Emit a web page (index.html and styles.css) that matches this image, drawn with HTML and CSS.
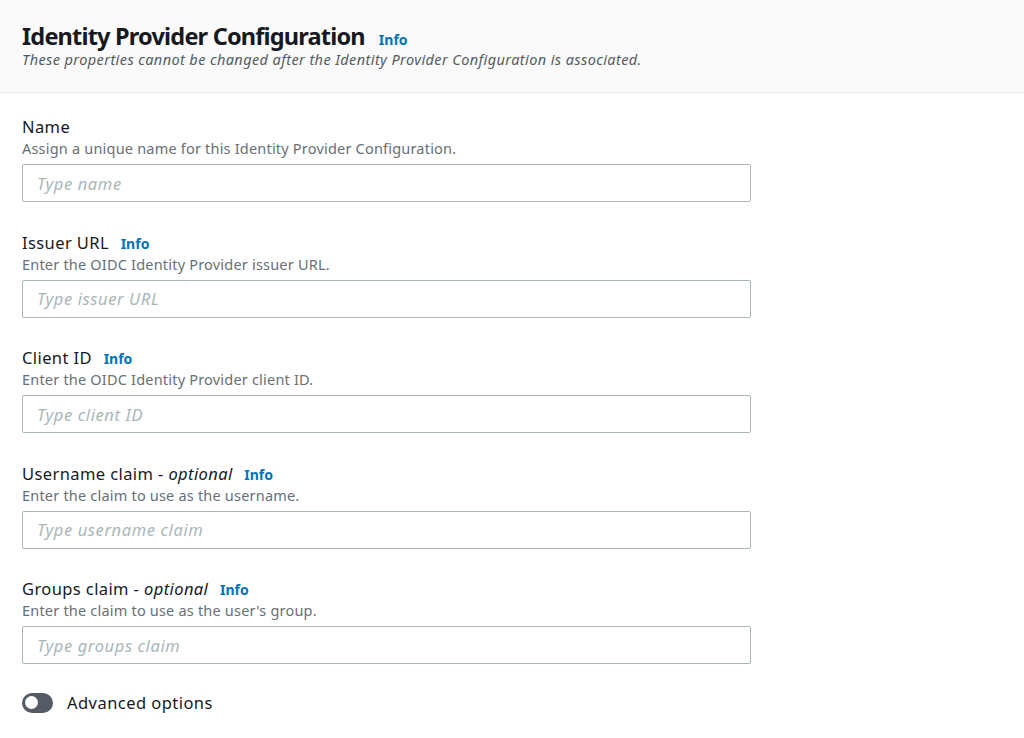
FILE: index.html
```html
<!DOCTYPE html>
<html lang="en">
<head>
<meta charset="utf-8">
<title>Identity Provider Configuration</title>
<link rel="stylesheet" href="styles.css">
</head>
<body>
<div class="panel">
  <header class="panel-header">
    <h2 class="title"><span>Identity Provider Configuration</span><a class="info" href="#">Info</a></h2>
    <p class="subtitle">These properties cannot be changed after the Identity Provider Configuration is associated.</p>
  </header>
  <form class="form">
    <div class="field">
      <label class="label">Name</label>
      <div class="desc">Assign a unique name for this Identity Provider Configuration.</div>
      <input class="input" type="text" placeholder="Type name">
    </div>
    <div class="field">
      <label class="label">Issuer URL <a class="info" href="#">Info</a></label>
      <div class="desc">Enter the OIDC Identity Provider issuer URL.</div>
      <input class="input" type="text" placeholder="Type issuer URL">
    </div>
    <div class="field">
      <label class="label">Client ID <a class="info" href="#">Info</a></label>
      <div class="desc">Enter the OIDC Identity Provider client ID.</div>
      <input class="input" type="text" placeholder="Type client ID">
    </div>
    <div class="field">
      <label class="label">Username claim - <i>optional</i> <a class="info" href="#">Info</a></label>
      <div class="desc">Enter the claim to use as the username.</div>
      <input class="input" type="text" placeholder="Type username claim">
    </div>
    <div class="field">
      <label class="label">Groups claim - <i>optional</i> <a class="info" href="#">Info</a></label>
      <div class="desc">Enter the claim to use as the user's group.</div>
      <input class="input" type="text" placeholder="Type groups claim">
    </div>
    <div class="toggle-row">
      <span class="toggle"><span class="knob"></span></span>
      <span class="toggle-label">Advanced options</span>
    </div>
  </form>
</div>
</body>
</html>
```
FILE: styles.css
```css
* { box-sizing: border-box; }
html, body { margin: 0; padding: 0; background: #ffffff; }
body {
  font-family: "Noto Sans", "Open Sans", Arial, sans-serif;
  color: #16191f;
}
.panel-header {
  background: #fafafa;
  border-bottom: 1px solid #eaeded;
  padding: 22px 22px 0;
  height: 93px;
}
.title {
  margin: 0;
  display: flex;
  align-items: baseline;
  gap: 14px;
  font-size: 23.5px;
  line-height: 28px;
  font-weight: 700;
  color: #16191f;
  letter-spacing: -0.8px;
}
.title .info { margin-left: 0; }
.subtitle {
  margin: -1px 0 0;
  font-size: 14.5px;
  line-height: 20px;
  font-style: italic;
  color: #545b64;
  letter-spacing: 0.4px;
}
.info {
  color: #0073bb;
  font-size: 14px;
  line-height: 20px;
  font-weight: 700;
  font-style: normal;
  text-decoration: none;
  margin-left: 7px;
  letter-spacing: 0;
}
.form {
  padding: 22px 22px 0;
  display: flex;
  flex-direction: column;
  gap: 28.5px;
}
.field { display: flex; flex-direction: column; width: 729px; }
.label {
  font-size: 16.5px;
  line-height: 23px;
  letter-spacing: 0.4px;
  color: #16191f;
}
.desc {
  font-size: 14.5px;
  line-height: 20px;
  letter-spacing: 0.2px;
  color: #687078;
  margin-bottom: 6px;
}
.input {
  height: 38px;
  width: 729px;
  border: 1px solid #aab7b8;
  border-radius: 2px;
  padding: 0 14px;
  font-family: inherit;
  font-size: 16.5px;
  letter-spacing: 0.6px;
  color: #16191f;
  background: #fff;
  outline: none;
}
.input::placeholder {
  color: #aab7b8;
  font-style: italic;
}
.toggle-row {
  display: flex;
  align-items: center;
  gap: 14px;
  height: 20px;
}
.toggle {
  width: 31px;
  height: 20px;
  border-radius: 10px;
  background: #545b64;
  display: flex;
  align-items: center;
  padding: 0 3px;
}
.knob {
  width: 13px;
  height: 13px;
  border-radius: 50%;
  background: #fff;
}
.toggle-label {
  font-size: 16.5px;
  line-height: 20px;
  letter-spacing: 0.45px;
}
```
